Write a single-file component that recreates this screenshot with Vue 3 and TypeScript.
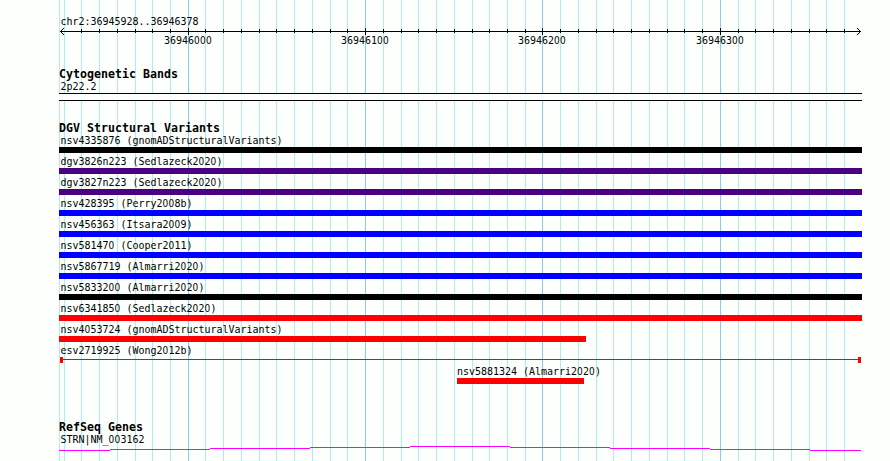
<script setup lang="ts">
import { defineComponent, h } from 'vue'

interface Variant {
  name: string
  color: string
  start: number
  end: number
  thin?: boolean
}

const LEFT = 59
const WIDTH = 803

const minor: number[] = [
  64, 81, 99, 117, 135, 152, 170, 205, 223, 241, 259, 276, 294, 312, 330, 347,
  383, 401, 418, 436, 454, 472, 489, 507, 525, 560, 578, 596, 613, 631, 649,
  667, 684, 702, 738, 755, 773, 791, 809, 826, 844,
]
const major = [
  { x: 188, label: '36946000' },
  { x: 365, label: '36946100' },
  { x: 542, label: '36946200' },
  { x: 720, label: '36946300' },
]
const ticks = minor.filter((x) => x > 64)

const variants: Variant[] = [
  { name: 'nsv4335876 (gnomADStructuralVariants)', color: '#000000', start: 59, end: 862 },
  { name: 'dgv3826n223 (Sedlazeck2020)', color: '#4b0082', start: 59, end: 862 },
  { name: 'dgv3827n223 (Sedlazeck2020)', color: '#4b0082', start: 59, end: 862 },
  { name: 'nsv428395 (Perry2008b)', color: '#0000ff', start: 59, end: 862 },
  { name: 'nsv456363 (Itsara2009)', color: '#0000ff', start: 59, end: 862 },
  { name: 'nsv581470 (Cooper2011)', color: '#0000ff', start: 59, end: 862 },
  { name: 'nsv5867719 (Almarri2020)', color: '#0000ff', start: 59, end: 862 },
  { name: 'nsv5833200 (Almarri2020)', color: '#000000', start: 59, end: 862 },
  { name: 'nsv6341850 (Sedlazeck2020)', color: '#ff0000', start: 59, end: 862 },
  { name: 'nsv4053724 (gnomADStructuralVariants)', color: '#ff0000', start: 59, end: 586 },
  { name: 'esv2719925 (Wong2012b)', color: '#ff0000', start: 60, end: 861, thin: true },
  { name: 'nsv5881324 (Almarri2020)', color: '#ff0000', start: 457, end: 584 },
]

// Intron hat of the gene: [x, y, width] steps relative to the track.
const gene: [number, number, number][] = [
  [0, 4, 51], [51, 3, 100], [151, 2, 100], [251, 1, 100], [351, 0, 100],
  [451, 1, 100], [551, 2, 100], [651, 3, 100], [751, 4, 51],
]

// Label in the fixed-width face, with open (undotted) zeros.
const Label = defineComponent({
  props: { text: { type: String, required: true } },
  setup(props) {
    return () =>
      h(
        'div',
        { class: 'label' },
        props.text.split(/(0+)/).map((part) =>
          part.startsWith('0') ? h('span', { class: 'zero' }, part) : part,
        ),
      )
  },
})
</script>

<template>
  <main class="browser">
    <svg class="grid" width="890" height="461" shape-rendering="crispEdges" aria-hidden="true">
      <rect :x="LEFT" y="0" width="1" height="461" fill="#afeeee" />
      <rect v-for="x in minor" :key="x" :x="x" y="0" width="1" height="461" fill="#afeeee" />
      <rect v-for="m in major" :key="m.x" :x="m.x" y="0" width="1" height="461" fill="#87ceeb" />
    </svg>

    <div class="tracks">
      <section class="ruler">
        <Label text="chr2:36945928..36946378" />
        <svg class="axis" :width="WIDTH" height="7" viewBox="59 28 803 7" shape-rendering="crispEdges">
          <rect x="60" y="31" width="801" height="1" />
          <rect v-for="x in ticks" :key="x" :x="x" y="29" width="1" height="4" />
          <rect v-for="m in major" :key="m.x" :x="m.x" y="28" width="1" height="7" />
          <path d="M61 30h1v1h-1zM62 29h1v1h-1zM63 28h1v1h-1zM61 32h1v1h-1zM62 33h1v1h-1zM63 34h1v1h-1z" />
          <path d="M859 30h1v1h-1zM858 29h1v1h-1zM857 28h1v1h-1zM859 32h1v1h-1zM858 33h1v1h-1zM857 34h1v1h-1z" />
        </svg>
        <div class="scale">
          <Label v-for="m in major" :key="m.x" :text="m.label" />
        </div>
      </section>

      <section class="cyto">
        <h2>Cytogenetic Bands</h2>
        <Label text="2p22.2" />
        <div class="band"></div>
      </section>

      <section class="dgv">
        <h2>DGV Structural Variants</h2>
        <div
          v-for="v in variants"
          :key="v.name"
          class="variant"
          :style="{ marginLeft: v.start - LEFT + 'px', width: v.end - v.start + 'px', color: v.color }"
        >
          <Label :text="v.name" :class="{ inset: v.thin || v.start > LEFT }" />
          <div class="bar" :class="{ thin: v.thin }"></div>
        </div>
      </section>

      <section class="refseq">
        <h2>RefSeq Genes</h2>
        <Label text="STRN|NM_003162" />
        <svg class="gene" :width="WIDTH" height="15" shape-rendering="crispEdges">
          <rect v-for="g in gene" :key="g[0]" :x="g[0]" :y="g[1]" :width="g[2]" height="1" fill="#ff00ff" />
        </svg>
      </section>
    </div>
  </main>
</template>

<style>
body {
  background: #fdfffc;
}
</style>

<style scoped>
.browser {
  position: relative;
  width: 890px;
  height: 461px;
  overflow: hidden;
  background: #fdfffc;
  font-family: 'DejaVu Sans Mono', 'Liberation Mono', monospace;
}
.grid {
  position: absolute;
  inset: 0;
}
.tracks {
  position: relative;
  width: 803px;
  padding: 15px 0 0 59px;
}
:deep(.label) {
  height: 13px;
  padding-left: 1.5px;
  font-size: 10px;
  line-height: 13px;
  letter-spacing: -0.02px;
  white-space: pre;
  color: #000;
  transform: scaleY(1.1);
  transform-origin: 0 10px;
}
:deep(.label.inset) {
  padding-left: 0.5px;
}
:deep(.variant:last-child .label) {
  padding-left: 0;
}
:deep(.zero) {
  font-family: 'DejaVu Sans Condensed', 'DejaVu Sans', sans-serif;
  font-stretch: condensed;
  letter-spacing: 0.27px;
}
h2 {
  height: 12px;
  margin: 0;
  padding-top: 1px;
  font-size: 11.6px;
  font-weight: bold;
  line-height: 13px;
  letter-spacing: 0.016px;
  white-space: pre;
  color: #000;
}
.ruler {
  height: 52px;
}
.axis {
  display: block;
}
.scale {
  display: grid;
  grid-template-columns: 177px 177px 178px 60px;
  margin: -1px 0 0 103.5px;
}
.band {
  height: 6px;
  border-top: 1px solid #000;
  border-bottom: 1px solid #000;
  background: #fdfffc;
}
.dgv {
  margin-top: 20px;
}
.variant {
  height: 21px;
}
.bar {
  height: 6px;
  background: currentColor;
}
.bar.thin {
  display: flex;
  justify-content: space-between;
  background: linear-gradient(currentColor, currentColor) 0 2px / 100% 1px no-repeat;
}
.bar.thin::before,
.bar.thin::after {
  content: '';
  width: 3px;
  background: currentColor;
}
.refseq {
  margin-top: 34px;
}
.gene {
  display: block;
}
</style>
